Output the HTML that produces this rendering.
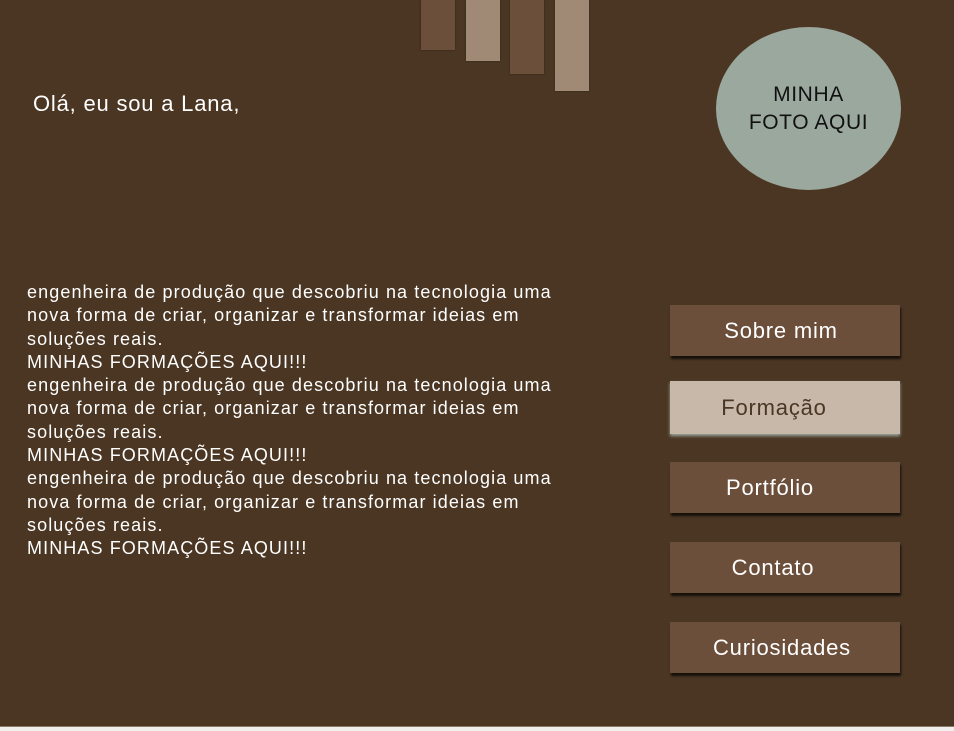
<!DOCTYPE html>
<html><head><meta charset="utf-8"><style>
html,body{margin:0;padding:0;width:954px;height:731px;background:#f0efed;overflow:hidden;font-family:"Liberation Sans",sans-serif}
#m{position:absolute;left:0;top:0;width:954px;height:726px;background:#4a3623;border-bottom:1px solid #8a7a66}
.b{position:absolute;top:0;width:34px;box-shadow:0 0 2px rgba(0,0,0,.3)}
.d{background:#6b4f3a}.l{background:#a08a75}
#c{position:absolute;left:716px;top:27px;width:185px;height:163px;border-radius:50%;background:#9ba89e;color:#111;font-size:21px;letter-spacing:0.6px;text-align:center;display:flex;align-items:center;justify-content:center;line-height:28px}
#h{position:absolute;left:33px;top:91px;color:#fff;font-size:22px;letter-spacing:0.8px}
#t{position:absolute;left:27px;top:281px;color:#fff;font-size:18px;letter-spacing:1.1px;line-height:23.3px;white-space:pre}
.n{position:absolute;left:670px;width:230px;height:51px;background:#6b4f3a;color:#fff;font-size:22px;letter-spacing:0.8px;display:flex;align-items:center;justify-content:center;box-shadow:1px 3px 2px rgba(0,0,0,.7);box-sizing:border-box}
</style></head><body><div id="m">
<div class="b d" style="left:421px;height:50px"></div>
<div class="b l" style="left:466px;height:61px"></div>
<div class="b d" style="left:510px;height:74px"></div>
<div class="b l" style="left:555px;height:91px"></div>
<div id="c">MINHA<br>FOTO AQUI</div>
<div id="h">Olá, eu sou a Lana,</div>
<div id="t">engenheira de produção que descobriu na tecnologia uma
nova forma de criar, organizar e transformar ideias em
soluções reais.
MINHAS FORMAÇÕES AQUI!!!
engenheira de produção que descobriu na tecnologia uma
nova forma de criar, organizar e transformar ideias em
soluções reais.
MINHAS FORMAÇÕES AQUI!!!
engenheira de produção que descobriu na tecnologia uma
nova forma de criar, organizar e transformar ideias em
soluções reais.
MINHAS FORMAÇÕES AQUI!!!</div>
<div class="n" style="top:305px;padding-right:8px">Sobre mim</div>
<div class="n" style="top:381px;height:53px;background:#c8b8a9;color:#4a3623;box-shadow:0 2px 3px #9ba89e;padding-right:22px">Formação</div>
<div class="n" style="top:462px;padding-right:30px">Portfólio</div>
<div class="n" style="top:542px;padding-right:24px">Contato</div>
<div class="n" style="top:622px;padding-right:6px">Curiosidades</div>
</div></body></html>
